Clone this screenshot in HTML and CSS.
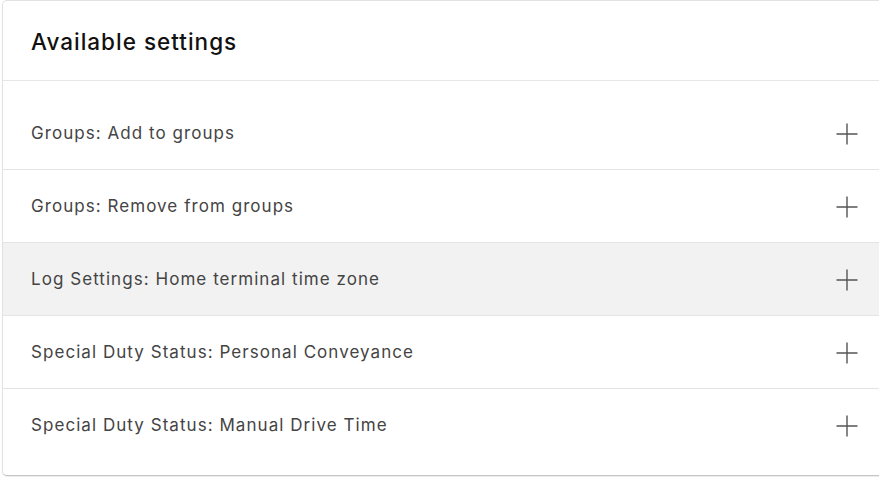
FILE: index.html
```html
<!DOCTYPE html>
<html lang="en">
<head>
<meta charset="utf-8">
<title>Available settings</title>
<link rel="stylesheet" href="styles.css">
</head>
<body>
<div class="card">
  <div class="card-header">
    <h2 class="title">Available settings</h2>
  </div>
  <ul class="list">
    <li class="row"><span class="label">Groups: Add to groups</span><svg class="plus" viewBox="0 0 22 22" width="22" height="22"><path d="M11 0.5V21.5M0.5 11H21.5" stroke="#555" stroke-width="1.4" fill="none"/></svg></li>
    <li class="row"><span class="label">Groups: Remove from groups</span><svg class="plus" viewBox="0 0 22 22" width="22" height="22"><path d="M11 0.5V21.5M0.5 11H21.5" stroke="#555" stroke-width="1.4" fill="none"/></svg></li>
    <li class="row row-active"><span class="label">Log Settings: Home terminal time zone</span><svg class="plus" viewBox="0 0 22 22" width="22" height="22"><path d="M11 0.5V21.5M0.5 11H21.5" stroke="#555" stroke-width="1.4" fill="none"/></svg></li>
    <li class="row"><span class="label">Special Duty Status: Personal Conveyance</span><svg class="plus" viewBox="0 0 22 22" width="22" height="22"><path d="M11 0.5V21.5M0.5 11H21.5" stroke="#555" stroke-width="1.4" fill="none"/></svg></li>
    <li class="row"><span class="label">Special Duty Status: Manual Drive Time</span><svg class="plus" viewBox="0 0 22 22" width="22" height="22"><path d="M11 0.5V21.5M0.5 11H21.5" stroke="#555" stroke-width="1.4" fill="none"/></svg></li>
  </ul>
</div>
</body>
</html>
```
FILE: styles.css
```css
html, body {
  margin: 0;
  padding: 0;
  background: #ffffff;
  overflow: hidden;
}
body {
  font-family: Inter, "Noto Sans", "Liberation Sans", sans-serif;
  width: 879px;
  height: 477px;
}
.card {
  margin-left: 2px;
  width: 900px;
  height: 476px;
  box-sizing: border-box;
  border: 1px solid #e2e2e2;
  border-bottom-color: #c4c4c4;
  border-radius: 5px;
  background: #fff;
  box-shadow: 0 1px 1px rgba(0,0,0,0.08);
}
.card-header {
  height: 79px;
  border-bottom: 1px solid #e6e6e6;
  display: flex;
  align-items: center;
  padding: 0 28px;
}
.title {
  margin: 0;
  font-size: 22.5px;
  font-weight: 500;
  color: #111;
  letter-spacing: 1px;
  padding-top: 2px;
}
.list {
  list-style: none;
  margin: 0;
  padding: 16px 0 0 0;
}
.row {
  height: 72px;
  display: flex;
  align-items: center;
  justify-content: space-between;
  padding: 0 43px 0 28px;
  border-top: 1px solid #e4e4e4;
  font-size: 17px;
  color: #444444;
}
.row:first-child {
  border-top: none;
}
.row-active {
  background: #f2f2f2;
}
.label {
  letter-spacing: 1.05px;
}
.plus {
  display: block;
  margin-top: 1px;
}
```
